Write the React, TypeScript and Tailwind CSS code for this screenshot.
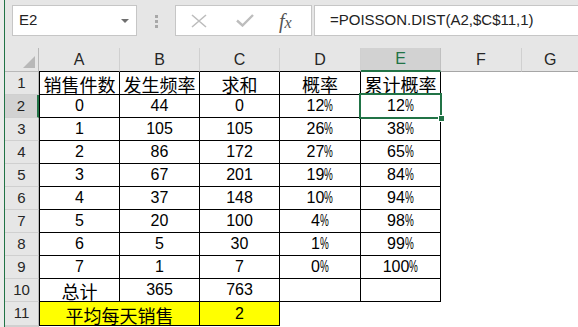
import React from "react";

const FONT = { fontFamily: '"Liberation Sans", "Noto Sans CJK SC", Arial, sans-serif' };

const widths = ["w-[81px]", "w-[80px]", "w-[80px]", "w-[81px]", "w-[80px]", "w-[81px]"];

const rows: string[][] = [
  ["销售件数", "发生频率", "求和", "概率", "累计概率"],
  ["0", "44", "0", "12%", "12%"],
  ["1", "105", "105", "26%", "38%"],
  ["2", "86", "172", "27%", "65%"],
  ["3", "67", "201", "19%", "84%"],
  ["4", "37", "148", "10%", "94%"],
  ["5", "20", "100", "4%", "98%"],
  ["6", "5", "30", "1%", "99%"],
  ["7", "1", "7", "0%", "100%"],
  ["总计", "365", "763", "", ""],
];

function CellText({ t }: { t: string }) {
  if (!t) return null;
  if (/[\u4e00-\u9fff]/.test(t)) {
    return (
      <span className="text-[18px] leading-none mt-[2px]" style={{ fontFamily: '"Noto Sans CJK SC", sans-serif' }}>
        {t}
      </span>
    );
  }
  if (t.endsWith("%")) {
    return (
      <span className="text-[16px] leading-none">
        {t.slice(0, -1)}
        <span className="inline-block w-[9px] origin-left scale-x-[0.62]">%</span>
      </span>
    );
  }
  return <span className="text-[16px] leading-none">{t}</span>;
}

function RowHead({ n, sel }: { n?: number; sel?: boolean }) {
  return (
    <div
      className={
        "w-[34px] shrink-0 flex items-center justify-center text-[15px] border-b border-[#d0d0d0] " +
        (sel
          ? "bg-[#d2d2d2] text-[#1e1e1e] border-r-2 border-r-[#217346]"
          : "bg-[#e6e6e6] text-[#262626] border-r border-r-[#b8b8b8]")
      }
    >
      {n}
    </div>
  );
}

export default function App() {
  return (
    <div className="w-[578px] h-[327px] overflow-hidden flex bg-white" style={FONT}>
      <div className="w-[4px] shrink-0 bg-[#ececec]" />
      <div className="w-[1px] shrink-0 bg-[#217346]" />
      <div className="flex-1 flex flex-col min-w-0">
        {/* top bar */}
        <div className="h-[48px] shrink-0 bg-[#e6e6e6] flex items-start pt-[5px] pl-[7px]">
          <div className="w-[125px] h-[31px] shrink-0 bg-white border border-[#c6c6c6] flex items-center pl-[6px] pr-[7px]">
            <span className="text-[15px] text-[#222]">E2</span>
            <div className="ml-auto w-0 h-0 border-l-[4px] border-r-[4px] border-t-[4px] border-l-transparent border-r-transparent border-t-[#6f6f6f]" />
          </div>
          <div className="ml-[18px] mt-[10px] flex flex-col gap-[2px]">
            <div className="w-[3px] h-[3px] bg-[#a8a8a8]" />
            <div className="w-[3px] h-[3px] bg-[#a8a8a8]" />
            <div className="w-[3px] h-[3px] bg-[#a8a8a8]" />
          </div>
          <div className="ml-[17px] w-[137px] h-[31px] shrink-0 bg-white border border-[#c6c6c6] flex items-center pl-[15px]">
            <svg width="16" height="14" viewBox="0 0 16 14">
              <path d="M1 1 L15 13 M15 1 L1 13" stroke="#bdbdbd" strokeWidth="1.6" fill="none" />
            </svg>
            <svg className="ml-[29px]" width="18" height="13" viewBox="0 0 18 13">
              <path d="M1 6.5 L6.5 11.5 L17 1" stroke="#bdbdbd" strokeWidth="2.4" fill="none" />
            </svg>
            <span
              className="ml-[25px] italic text-[#555] leading-none"
              style={{ fontFamily: '"Liberation Serif", serif' }}
            >
              <span className="text-[20px]">f</span>
              <span className="text-[16px]">x</span>
            </span>
          </div>
          <div className="ml-[2px] w-[300px] h-[31px] shrink-0 bg-white border border-[#c6c6c6] flex items-center pl-[15px]">
            <span className="text-[15px] text-[#222] whitespace-nowrap">=POISSON.DIST(A2,$C$11,1)</span>
          </div>
        </div>

        {/* grid */}
        <div className="relative flex-1 flex flex-col">
          {/* header row */}
          <div className="flex h-[24px] shrink-0">
            <div className="w-[34px] shrink-0 bg-[#e6e6e6] border-r border-b border-[#b8b8b8] relative">
              <svg className="absolute right-[3px] bottom-[3px]" width="12" height="12" viewBox="0 0 12 12">
                <path d="M12 0 L12 12 L0 12 Z" fill="#b8b8b8" />
              </svg>
            </div>
            {["A", "B", "C", "D"].map((c, i) => (
              <div
                key={c}
                className={
                  widths[i] +
                  " shrink-0 bg-[#e6e6e6] border-r border-r-[#d0d0d0] border-b border-b-black flex items-center justify-center text-[16px] text-[#262626]"
                }
              >
                {c}
              </div>
            ))}
            <div className="w-[80px] shrink-0 bg-[#d2d2d2] border-r border-r-[#c0c0c0] border-b-2 border-b-[#217346] flex items-center justify-center text-[16px] text-[#217346]">
              E
            </div>
            <div className="w-[81px] shrink-0 bg-[#e6e6e6] border-r border-r-[#d0d0d0] border-b border-b-[#a6a6a6] flex items-center justify-center text-[16px] text-[#262626]">
              F
            </div>
            <div className="flex-1 bg-[#e6e6e6] border-b border-b-[#a6a6a6] flex items-center justify-start pl-[22px] text-[16px] text-[#262626]">
              G
            </div>
          </div>

          {rows.map((r, ri) => (
            <div key={ri} className="flex h-[23px] shrink-0">
              <RowHead n={ri + 1} sel={ri === 1} />
              {r.map((t, ci) => (
                <div
                  key={ci}
                  className={
                    widths[ci] +
                    " shrink-0 border-r border-b border-black flex items-center justify-center text-black" +
                    (ci === 0 ? " border-l" : "")
                  }
                >
                  <CellText t={t} />
                </div>
              ))}
              <div className="w-[81px] shrink-0" />
              <div className="flex-1" />
            </div>
          ))}

          {/* row 11 */}
          <div className="flex h-[24px] shrink-0">
            <RowHead n={11} />
            <div className="w-[161px] shrink-0 border-l border-r border-b border-black bg-[#ffff00] flex items-center justify-center text-black">
              <CellText t="平均每天销售" />
            </div>
            <div className="w-[80px] shrink-0 border-r border-b border-black bg-[#ffff00] flex items-center justify-center text-black">
              <CellText t="2" />
            </div>
            <div className="flex-1" />
          </div>

          {/* row 12 (only a sliver visible) */}
          <div className="flex flex-1">
            <RowHead />
            <div className="flex-1" />
          </div>

          {/* selection E2 */}
          <div className="absolute left-[354px] top-[45px] w-[83px] h-[26px] border-2 border-[#217346]">
            <div className="absolute left-[77px] top-[20px] w-[7px] h-[7px] bg-[#217346] border border-white" />
          </div>
        </div>
      </div>
    </div>
  );
}
